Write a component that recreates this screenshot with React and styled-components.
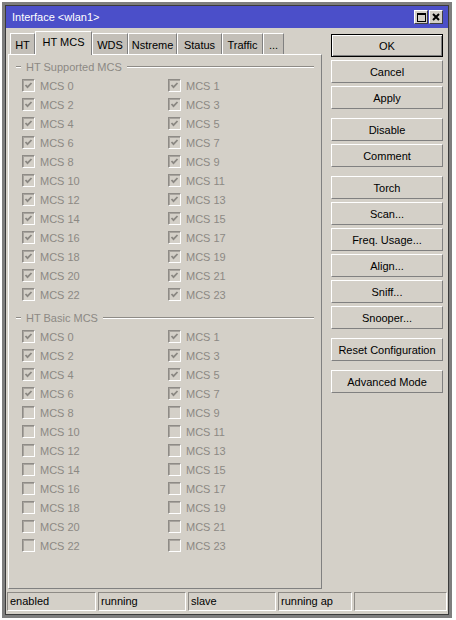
import React from "react";
import styled, { createGlobalStyle } from "styled-components";

const GlobalStyle = createGlobalStyle`
  html, body {
    margin: 0;
    padding: 0;
    background: #fff;
  }
  body {
    font-family: "Liberation Sans", Arial, sans-serif;
    font-size: 11px;
  }
`;

const Frame = styled.div`
  margin: 2px 0 0 2px;
  width: 450px;
  height: 616px;
  box-sizing: border-box;
  border: 3px solid #7e7e7e;
`;

const Inner = styled.div`
  height: 100%;
  box-sizing: border-box;
  border: 1px solid #3b3b3b;
  background: #d4d0c8;
  display: flex;
  flex-direction: column;
`;

const TitleBar = styled.div`
  height: 22px;
  flex: none;
  background: #4b4fc9;
  color: #fff;
  display: flex;
  align-items: center;
  padding: 0 5px 0 6px;
  font-size: 11px;
`;

const Title = styled.span`
  flex: 1;
`;

const TitleButton = styled.div`
  width: 14px;
  height: 14px;
  box-sizing: border-box;
  background: #d4d0c8;
  border: 1px solid;
  border-color: #fff #404040 #404040 #fff;
  display: flex;
  align-items: center;
  justify-content: center;
  margin-left: 1px;
`;

const Body = styled.div`
  flex: 1;
  display: flex;
  padding: 3px 5px 0 2px;
  min-height: 0;
`;

const LeftPane = styled.div`
  width: 314px;
  display: flex;
  flex-direction: column;
`;

const TabRow = styled.div`
  height: 23px;
  display: flex;
  align-items: flex-end;
  padding-left: 2px;
  flex: none;
`;

const Tab = styled.div`
  width: ${(p) => p.$w}px;
  height: ${(p) => (p.$active ? 24 : 21)}px;
  box-sizing: border-box;
  background: ${(p) => (p.$active ? "#d4d0c8" : "#c3bfb8")};
  border-top: 1px solid #fff;
  border-left: 1px solid #fff;
  border-right: 1px solid #808080;
  margin-bottom: ${(p) => (p.$active ? -1 : 0)}px;
  position: relative;
  z-index: ${(p) => (p.$active ? 1 : 0)};
  display: flex;
  justify-content: center;
  padding-top: ${(p) => (p.$active ? 4 : 5)}px;
  color: #000;
  white-space: nowrap;
`;

const Panel = styled.div`
  height: 535px;
  box-sizing: border-box;
  border: 1px solid;
  border-color: #fff #808080 #808080 #fff;
  padding: 5px 7px 0 7px;
`;

const Group = styled.div`
  margin-bottom: 7px;
`;

const Legend = styled.div`
  height: 13px;
  display: flex;
  align-items: center;
  gap: 5px;
  color: #8c8984;
`;

const EtchLine = styled.div`
  height: 0;
  border-top: 1px solid #8e8b86;
  border-bottom: 1px solid #fff;
  width: ${(p) => (p.$short ? "5px" : "auto")};
  flex: ${(p) => (p.$short ? "none" : 1)};
`;

const Grid = styled.div`
  margin-top: 3px;
  display: grid;
  grid-template-columns: 146px 146px;
  grid-auto-rows: 19px;
  padding-left: 6px;
`;

const CheckRow = styled.div`
  display: flex;
  align-items: center;
  gap: 5px;
  color: #8c8984;
`;

const Box = styled.span`
  width: 13px;
  height: 13px;
  box-sizing: border-box;
  border: 1px solid;
  border-color: #8e8b86 #fff #fff #8e8b86;
  box-shadow: inset 1px 1px 0 #a8a49e;
  display: flex;
  align-items: center;
  justify-content: center;
`;

const ButtonColumn = styled.div`
  margin-left: 9px;
  padding-top: 3px;
  width: 112px;
  display: flex;
  flex-direction: column;
  gap: 9px;
`;

const ButtonGroup = styled.div`
  display: flex;
  flex-direction: column;
  gap: 3px;
`;

const Button = styled.div`
  height: 23px;
  box-sizing: border-box;
  border: 1px solid;
  border-color: ${(p) => (p.$default ? "#000" : "#fff #808080 #808080 #fff")};
  box-shadow: ${(p) =>
    p.$default
      ? "inset 1px 1px 0 #fff, inset -1px -1px 0 #808080"
      : "inset -1px -1px 0 #d4d0c8, inset 1px 1px 0 #d4d0c8"};
  display: flex;
  align-items: center;
  justify-content: center;
  color: #000;
`;

const StatusBar = styled.div`
  height: 19px;
  flex: none;
  display: flex;
  gap: 2px;
  margin: 2px 1px 3px 1px;
`;

const StatusCell = styled.div`
  width: ${(p) => p.$w}px;
  box-sizing: border-box;
  border: 1px solid;
  border-color: #8e8b86 #fff #fff #8e8b86;
  padding: 2px 0 0 2px;
  color: #000;
  white-space: nowrap;
`;

const Check = () => (
  <svg width="9" height="9" viewBox="0 0 9 9">
    <polyline points="1.5,4 3.5,6.2 7.5,2" fill="none" stroke="#8a8782" strokeWidth="1.8" />
  </svg>
);

const tabs = [
  { label: "HT", w: 25 },
  { label: "HT MCS", w: 57, active: true },
  { label: "WDS", w: 36 },
  { label: "Nstreme", w: 49 },
  { label: "Status", w: 45 },
  { label: "Traffic", w: 41 },
  { label: "...", w: 21 },
];

const buttonGroups = [
  ["OK", "Cancel", "Apply"],
  ["Disable", "Comment"],
  ["Torch", "Scan...", "Freq. Usage...", "Align...", "Sniff...", "Snooper..."],
  ["Reset Configuration"],
  ["Advanced Mode"],
];

const status = [
  { text: "enabled", w: 89 },
  { text: "running", w: 88 },
  { text: "slave", w: 88 },
  { text: "running ap", w: 74 },
  { text: "", w: 93 },
];

const mcs = Array.from({ length: 24 }, (_, i) => i);

const McsGroup = ({ title, isChecked }) => (
  <Group>
    <Legend>
      <EtchLine $short />
      <span>{title}</span>
      <EtchLine />
    </Legend>
    <Grid>
      {mcs.map((i) => (
        <CheckRow key={i}>
          <Box>{isChecked(i) && <Check />}</Box>
          <span>MCS {i}</span>
        </CheckRow>
      ))}
    </Grid>
  </Group>
);

export default function App() {
  return (
    <>
      <GlobalStyle />
      <Frame>
        <Inner>
          <TitleBar>
            <Title>Interface &lt;wlan1&gt;</Title>
            <TitleButton>
              <svg width="9" height="9" viewBox="0 0 9 9">
                <rect x="0.5" y="0.5" width="8" height="8" fill="none" stroke="#000" />
                <rect x="0" y="0" width="9" height="2" fill="#000" />
              </svg>
            </TitleButton>
            <TitleButton>
              <svg width="8" height="8" viewBox="0 0 8 8">
                <path d="M1 1 L7 7 M7 1 L1 7" stroke="#000" strokeWidth="2" />
              </svg>
            </TitleButton>
          </TitleBar>
          <Body>
            <LeftPane>
              <TabRow>
                {tabs.map((t) => (
                  <Tab key={t.label} $w={t.w} $active={t.active}>
                    {t.label}
                  </Tab>
                ))}
              </TabRow>
              <Panel>
                <McsGroup title="HT Supported MCS" isChecked={() => true} />
                <McsGroup title="HT Basic MCS" isChecked={(i) => i < 8} />
              </Panel>
            </LeftPane>
            <ButtonColumn>
              {buttonGroups.map((g, gi) => (
                <ButtonGroup key={gi}>
                  {g.map((b) => (
                    <Button key={b} $default={b === "OK"}>
                      {b}
                    </Button>
                  ))}
                </ButtonGroup>
              ))}
            </ButtonColumn>
          </Body>
          <StatusBar>
            {status.map((s, i) => (
              <StatusCell key={i} $w={s.w}>
                {s.text}
              </StatusCell>
            ))}
          </StatusBar>
        </Inner>
      </Frame>
    </>
  );
}
